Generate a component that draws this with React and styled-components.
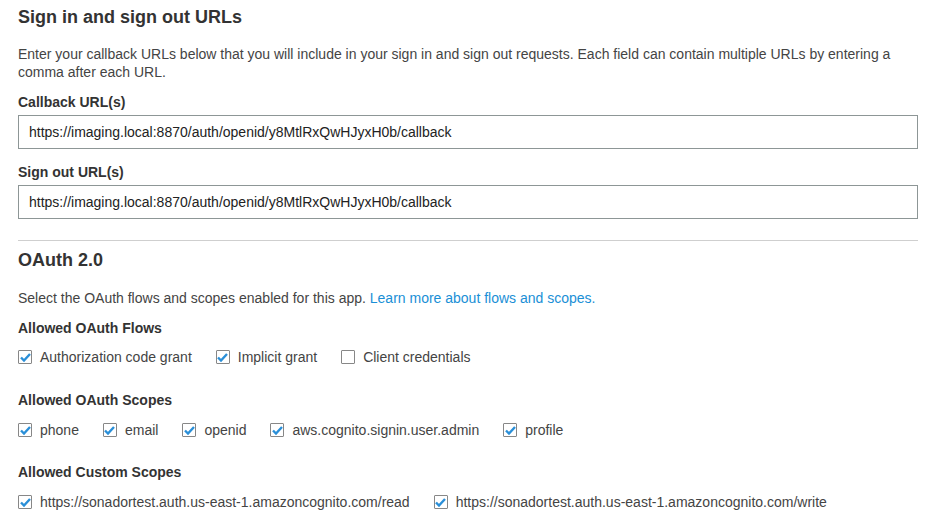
import React from 'react';
import styled, { createGlobalStyle } from 'styled-components';

const GlobalStyle = createGlobalStyle`
    body {
        margin: 0;
        background: #fff;
        font-family: "Liberation Sans", Arial, sans-serif;
        color: #333;
    }
`;

const Page = styled.div`
    width: 900px;
    padding: 5px 20px 0 18px;
`;

const Heading = styled.h2`
    margin: ${(p) => p.$top || 0}px 0 0;
    font-size: 18px;
    line-height: 24px;
    font-weight: bold;
    color: #333;
`;

const Text = styled.p`
    margin: ${(p) => p.$top || 0}px 0 0;
    font-size: 14px;
    line-height: 18px;
    color: #444;
`;

const Link = styled.a`
    color: #1a8fd6;
    text-decoration: none;
`;

const Label = styled.div`
    margin-top: ${(p) => p.$top || 0}px;
    font-size: 14px;
    line-height: 18px;
    font-weight: bold;
    color: #333;
`;

const Input = styled.input`
    display: block;
    box-sizing: border-box;
    width: 100%;
    height: 34px;
    margin-top: 4px;
    padding: 0 10px;
    border: 1px solid #8d9696;
    border-radius: 0;
    font-family: "Liberation Sans", Arial, sans-serif;
    font-size: 14px;
    color: #222;
    outline: none;
`;

const Divider = styled.hr`
    margin: 21px 0 0;
    border: 0;
    border-top: 1px solid #cfcfcf;
`;

const CheckRow = styled.div`
    display: flex;
    align-items: center;
    gap: 24px;
    margin-top: ${(p) => p.$top || 11}px;
`;

const CheckItem = styled.label`
    display: flex;
    align-items: center;
    gap: 8px;
    font-size: 14px;
    line-height: 18px;
    color: #444;
`;

const Box = styled.span`
    box-sizing: border-box;
    width: 14px;
    height: 14px;
    border: 1px solid #878787;
    border-radius: 1px;
    background: #fff;
    display: flex;
    align-items: center;
    justify-content: center;
`;

const Check = ({ checked, children }) => (
    <CheckItem>
        <Box>
            {checked && (
                <svg width="11" height="9" viewBox="0 0 11 9">
                    <path d="M1 4.5 L4 7.5 L10 1" fill="none" stroke="#2a8fd8" strokeWidth="2.4" />
                </svg>
            )}
        </Box>
        {children}
    </CheckItem>
);

const App = () => {
    const url = 'https://imaging.local:8870/auth/openid/y8MtlRxQwHJyxH0b/callback';
    return (
        <React.Fragment>
            <GlobalStyle />
            <Page>
                <Heading>Sign in and sign out URLs</Heading>
                <Text $top={16}>
                    Enter your callback URLs below that you will include in your sign in and sign out requests. Each field can contain multiple URLs by entering a comma after each URL.
                </Text>
                <Label $top={12}>Callback URL(s)</Label>
                <Input defaultValue={url} />
                <Label $top={14}>Sign out URL(s)</Label>
                <Input defaultValue={url} />
                <Divider />

                <Heading $top={7}>OAuth 2.0</Heading>
                <Text $top={17}>
                    Select the OAuth flows and scopes enabled for this app. <Link href="#">Learn more about flows and scopes.</Link>
                </Text>
                <Label $top={12}>Allowed OAuth Flows</Label>
                <CheckRow>
                    <Check checked>Authorization code grant</Check>
                    <Check checked>Implicit grant</Check>
                    <Check>Client credentials</Check>
                </CheckRow>

                <Label $top={25}>Allowed OAuth Scopes</Label>
                <CheckRow $top={12}>
                    <Check checked>phone</Check>
                    <Check checked>email</Check>
                    <Check checked>openid</Check>
                    <Check checked>aws.cognito.signin.user.admin</Check>
                    <Check checked>profile</Check>
                </CheckRow>

                <Label $top={24}>Allowed Custom Scopes</Label>
                <CheckRow $top={12}>
                    <Check checked>https://sonadortest.auth.us-east-1.amazoncognito.com/read</Check>
                    <Check checked>https://sonadortest.auth.us-east-1.amazoncognito.com/write</Check>
                </CheckRow>
            </Page>
        </React.Fragment>
    );
};

export default App;
